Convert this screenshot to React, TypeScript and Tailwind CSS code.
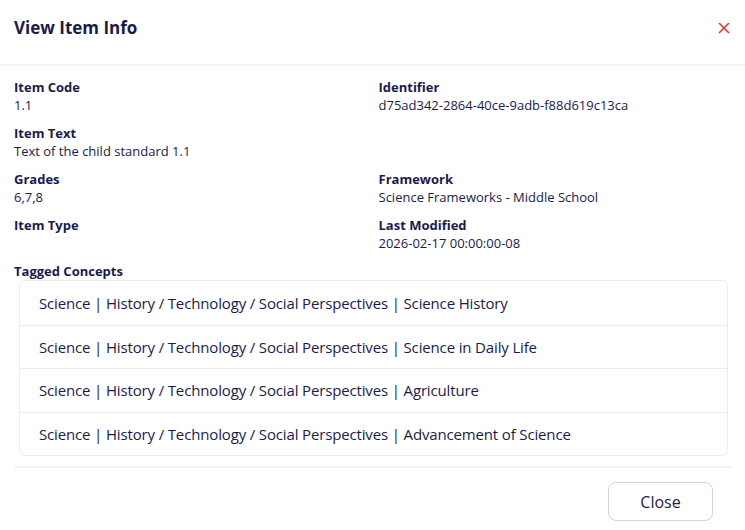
import { X } from "lucide-react"

interface fieldProp {
    label: string,
    value?: string
}

const Field = ({ label, value }: fieldProp) => {
    return (
        <div className="h-[46px]">
            <h4 className="text-[13px] leading-[18px] font-bold">{label}</h4>
            <p className="text-[13px] leading-[18px]">{value}</p>
        </div>
    )
}

const concepts = [
    "Science | History / Technology / Social Perspectives | Science History",
    "Science | History / Technology / Social Perspectives | Science in Daily Life",
    "Science | History / Technology / Social Perspectives | Agriculture",
    "Science | History / Technology / Social Perspectives | Advancement of Science",
]

const App = () => {
    return (
        <div className="w-[745px] h-[530px] bg-white text-[#1b1b4b] font-['Open_Sans',sans-serif]">
            <div className="flex justify-between items-start h-[66px] border-b-2 border-[#f3f3f3] pl-[14px] pr-[12px] pt-[14px]">
                <h2 className="text-[17px] leading-[28px] font-bold">View Item Info</h2>
                <button className="mt-[5px] text-[#ee3124]">
                    <X size={18} strokeWidth={2} />
                </button>
            </div>
            <div className="px-[14px] pt-[12px]">
                <div className="grid grid-cols-2 gap-x-3">
                    <Field label="Item Code" value="1.1" />
                    <Field label="Identifier" value="d75ad342-2864-40ce-9adb-f88d619c13ca" />
                    <Field label="Item Text" value="Text of the child standard 1.1" />
                    <div />
                    <Field label="Grades" value="6,7,8" />
                    <Field label="Framework" value="Science Frameworks - Middle School" />
                    <Field label="Item Type" />
                    <Field label="Last Modified" value="2026-02-17 00:00:00-08" />
                </div>
                <h4 className="text-[13px] leading-[18px] font-bold">Tagged Concepts</h4>
                <div className="ml-[5px] mr-[3px] border border-[#ececec] rounded-md">
                    {concepts.map((c, i) => (
                        <div key={i} className={`h-[43.5px] flex items-center pl-[19px] text-[15px] tracking-[-0.15px] ${i > 0 ? "border-t border-[#ececec]" : ""}`}>
                            {c}
                        </div>
                    ))}
                </div>
                <div className="mt-[10px] border-t-2 border-[#f3f3f3]" />
                <div className="flex justify-end pr-[18px] pt-[14px]">
                    <button className="w-[105px] h-[39px] border border-[#d4d4d4] rounded-lg text-[16px]">Close</button>
                </div>
            </div>
        </div>
    )
}
export default App
